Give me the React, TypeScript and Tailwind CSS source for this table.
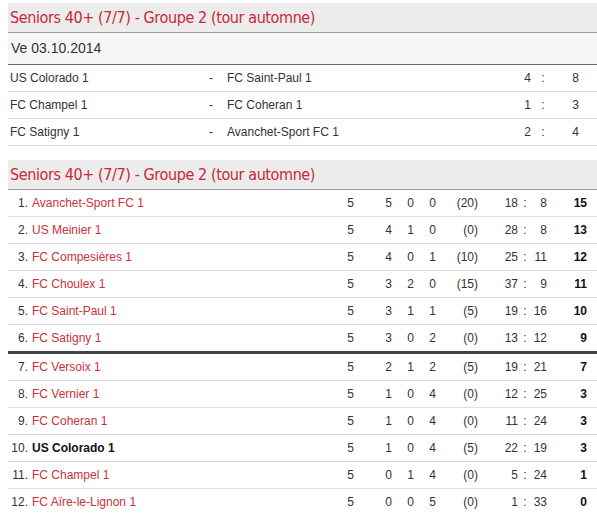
import React from "react";

const matches = [
  ["US Colorado 1", "FC Saint-Paul 1", "4", "8"],
  ["FC Champel 1", "FC Coheran 1", "1", "3"],
  ["FC Satigny 1", "Avanchet-Sport FC 1", "2", "4"],
];

type Row = [string, string, string, string, string, string, string, string, string, string, boolean?];
const standings: Row[] = [
  ["1.", "Avanchet-Sport FC 1", "5", "5", "0", "0", "(20)", "18", "8", "15"],
  ["2.", "US Meinier 1", "5", "4", "1", "0", "(0)", "28", "8", "13"],
  ["3.", "FC Compesières 1", "5", "4", "0", "1", "(10)", "25", "11", "12"],
  ["4.", "FC Choulex 1", "5", "3", "2", "0", "(15)", "37", "9", "11"],
  ["5.", "FC Saint-Paul 1", "5", "3", "1", "1", "(5)", "19", "16", "10"],
  ["6.", "FC Satigny 1", "5", "3", "0", "2", "(0)", "13", "12", "9"],
  ["7.", "FC Versoix 1", "5", "2", "1", "2", "(5)", "19", "21", "7"],
  ["8.", "FC Vernier 1", "5", "1", "0", "4", "(0)", "12", "25", "3"],
  ["9.", "FC Coheran 1", "5", "1", "0", "4", "(0)", "11", "24", "3"],
  ["10.", "US Colorado 1", "5", "1", "0", "4", "(5)", "22", "19", "3", true],
  ["11.", "FC Champel 1", "5", "0", "1", "4", "(0)", "5", "24", "1"],
  ["12.", "FC Aïre-le-Lignon 1", "5", "0", "0", "5", "(0)", "1", "33", "0"],
];

function Title() {
  return (
    <div
      className="h-[30px] bg-[#ececec] border-b border-[#9a9a9a] pl-[2px] text-[16px] tracking-[-0.4px] leading-[30px] text-[#c8283a] whitespace-nowrap"
      style={{ fontFamily: '"DejaVu Sans Condensed", "DejaVu Sans", sans-serif', fontStretch: "condensed" }}
    >
      Seniors 40+ (7/7) - Groupe 2 (tour automne)
    </div>
  );
}

export default function App() {
  return (
    <div
      className="w-[597px] h-[515px] overflow-hidden bg-white pl-[8px] pt-[3px] text-[#333]"
      style={{ fontFamily: '"Liberation Sans", Arial, sans-serif' }}
    >
      <div className="w-[589px]">
        <Title />
        <div className="h-[32px] bg-[#f6f6f6] border-b border-[#6a6a6a] pl-[3px] text-[14px] leading-[31px]">
          Ve 03.10.2014
        </div>
        {matches.map((m, i) => (
          <div key={i} className="flex h-[27px] items-center border-b border-[#dcdcdc] text-[12px] whitespace-nowrap">
            <span className="w-[198px] pl-[2px]">{m[0]}</span>
            <span className="w-[10px] text-center">-</span>
            <span className="w-[211px] pl-[11px]">{m[1]}</span>
            <span className="w-[104px] text-right">{m[2]}</span>
            <span className="w-[24px] text-center">:</span>
            <span className="w-[24px] text-right">{m[3]}</span>
          </div>
        ))}
        <div className="h-[14px]" />
        <Title />
        {standings.map((r, i) => (
          <div
            key={i}
            className={
              "flex items-center text-[12px] whitespace-nowrap " +
              (i === 5 ? "h-[29px] border-b-[3px] border-[#444]" : "h-[27px] border-b border-[#dcdcdc]")
            }
          >
            <span className="w-[20px] text-right">{r[0]}</span>
            <span className={"w-[306px] pl-[4px] " + (r[10] ? "font-bold text-[#111]" : "text-[#c8323a]")}>{r[1]}</span>
            <span className="w-[20px] text-right">{r[2]}</span>
            <span className="w-[38px] text-right">{r[3]}</span>
            <span className="w-[22px] text-right">{r[4]}</span>
            <span className="w-[22px] text-right">{r[5]}</span>
            <span className="w-[42px] text-right">{r[6]}</span>
            <span className="w-[40px] text-right">{r[7]}</span>
            <span className="w-[14px] text-center">:</span>
            <span className="w-[15px] text-right">{r[8]}</span>
            <span className="w-[40px] text-right font-bold text-[#111]">{r[9]}</span>
          </div>
        ))}
      </div>
    </div>
  );
}
